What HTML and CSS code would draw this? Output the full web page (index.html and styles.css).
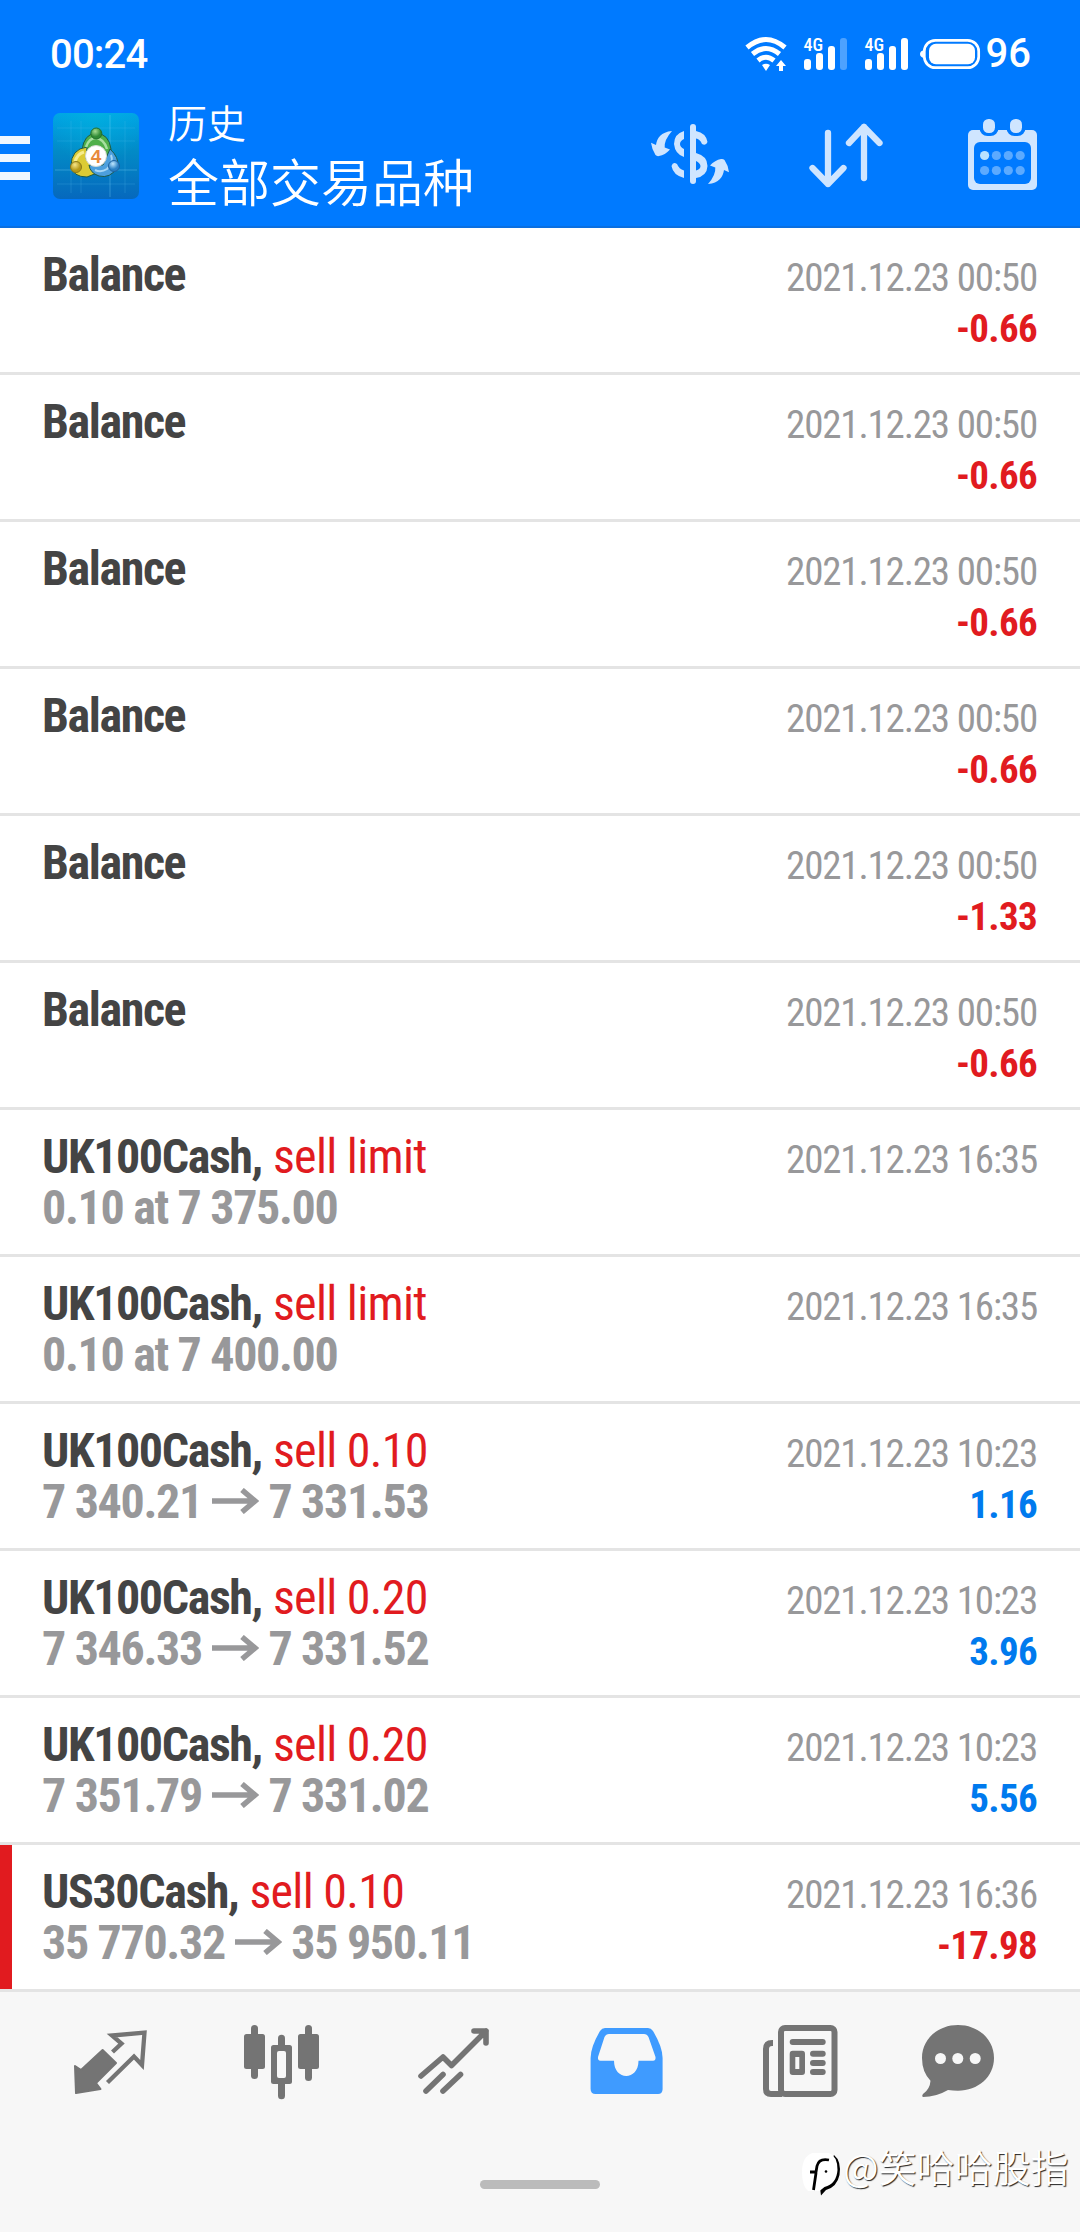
FILE: index.html
```html
<!DOCTYPE html>
<html lang="zh">
<head>
<meta charset="utf-8">
<title>历史</title>
<link rel="stylesheet" href="styles.css">
</head>
<body>
<header class="top">
  <div class="status">
    <span class="clock">00:24</span>
    <div class="indicators">
      <svg class="wifi" width="42" height="36" viewBox="745 36 42 36">
        <g fill="none" stroke="#fff" stroke-width="5">
          <path d="M747 47.5 Q766 31.500 785 47.500"/>
          <path d="M752.500 54 Q766 43 779.500 54"/>
          <path d="M758 60.500 Q766 54 774 60.500"/>
        </g>
        <path fill="#fff" d="M762 65 Q766 62.500 770 65 L766 71Z M781 60 l5 6 h-3 v5 h-4 v-5 h-3z"/>
      </svg>
      <div class="signal sim1"><span>4G</span>
        <svg width="44" height="34" viewBox="804 37 44 34"><g fill="#fff"><rect x="804" y="59" width="7" height="11" rx="3"/><rect x="816" y="53" width="7" height="17" rx="3"/><rect x="828" y="46" width="7" height="24" rx="3"/><rect x="840" y="38" width="7" height="32" rx="3" opacity=".3"/></g></svg>
      </div>
      <div class="signal sim2"><span>4G</span>
        <svg width="44" height="34" viewBox="804 37 44 34"><g fill="#fff"><rect x="804" y="59" width="7" height="11" rx="3"/><rect x="816" y="53" width="7" height="17" rx="3"/><rect x="828" y="46" width="7" height="24" rx="3"/><rect x="840" y="38" width="7" height="32" rx="3"/></g></svg>
      </div>
      <svg class="battery" width="62" height="32" viewBox="919 38 62 32">
        <path d="M924 50 q-4 1 -4 4 q0 3 4 4z" fill="#fff"/>
        <rect x="924.300" y="40.300" width="54.400" height="27.400" rx="11" fill="none" stroke="#fff" stroke-width="2.700"/>
        <rect x="929" y="43.700" width="46" height="20.600" rx="7" fill="#fff"/>
      </svg>
      <span class="percent">96</span>
    </div>
  </div>
  <div class="bar">
    <div class="burger"><i></i><i></i><i></i></div>
    <svg class="logo" width="86" height="86" viewBox="0 0 86 86">
      <defs>
        <linearGradient id="sky" x1="0" y1="0" x2="0" y2="1"><stop offset="0" stop-color="#00a3e6"/><stop offset=".45" stop-color="#028ac6"/><stop offset="1" stop-color="#0668bd"/></linearGradient>
        <radialGradient id="glow" cx=".5" cy="0" r=".6"><stop offset="0" stop-color="#0bd" stop-opacity=".5"/><stop offset="1" stop-color="#0bd" stop-opacity="0"/></radialGradient>
        <radialGradient id="gr" cx=".4" cy=".3"><stop offset="0" stop-color="#a5dd92"/><stop offset="1" stop-color="#2f8a35"/></radialGradient>
        <radialGradient id="ye" cx=".4" cy=".3"><stop offset="0" stop-color="#f5e68a"/><stop offset="1" stop-color="#b79a18"/></radialGradient>
        <radialGradient id="bl" cx=".4" cy=".3"><stop offset="0" stop-color="#bfe6ff"/><stop offset="1" stop-color="#2a7fc4"/></radialGradient>
      </defs>
      <rect width="86" height="86" rx="7" fill="url(#sky)"/>
      <rect width="86" height="86" rx="7" fill="url(#glow)"/>
      <path d="M18 8V80M28 8V80M72 8V80M4 15H82M4 28H82M4 71H82" stroke="#5cc4f0" stroke-opacity=".22"/>
      <path d="M57 2V84M2 57H84" stroke="#7fd4f5" stroke-opacity=".35"/>
      <g stroke="#1d5a4a" stroke-width="1">
        <path d="M29 37 Q31 21 43 20 Q56 21 58 36 Q58 45 52 49 L34 42Z" fill="#4faf4a"/>
        <path d="M34 34 Q18 36 18 53 Q20 64 34 64 L44 60 L33 46Z" fill="#dccb35"/>
        <path d="M57 36 Q66 44 65 54 Q57 66 46 63 Q37 60 36 52 L50 52Z" fill="#4c9fdd"/>
      </g>
      <path d="M33 34 Q36 25 43 25 Q51 26 54 36" fill="none" stroke="#a8dfa0" stroke-width="2.500"/>
      <path d="M22 49 Q24 41 31 39" fill="none" stroke="#f7ed8d" stroke-width="3"/>
      <path d="M58 42 Q61 49 54 56 Q48 60 42 57" fill="none" stroke="#a7d6f5" stroke-width="2"/>
      <circle cx="43.300" cy="20.500" r="5.500" fill="url(#gr)" stroke="#23702b"/>
      <circle cx="23" cy="54" r="5.500" fill="url(#ye)" stroke="#8b7a1a"/>
      <circle cx="61" cy="53" r="5.500" fill="url(#bl)" stroke="#1e62a0"/>
      <circle cx="43" cy="43" r="10.500" fill="#fff" stroke="#d5dcd5"/>
      <text x="43" y="49.500" text-anchor="middle" class="four">4</text>
    </svg>
    <div class="titles"><h1>历史</h1><p>全部交易品种</p></div>
    <svg class="act money" width="80" height="62" viewBox="650 123 80 62">
      <g fill="#cfe5ff">
        <rect x="690" y="124" width="6" height="60" rx="3"/>
        <path id="swap" d="M672 131 C661 132 657 138 656 145 L651 142.700 Q652 150 655.500 155 Q657 156.500 659 156 Q665 155 670 149.500 L664.700 147.500 Q664 140 672 131Z"/>
        <use href="#swap" transform="rotate(180 690 157.500)"/>
        <path d="M684 131 Q674 134 674 144 Q675 154 684 157 V149 Q680 147 680 144 Q680 141 684 139Z M696 131 Q706 133 707.500 142 Q706 146 702 144 Q700 139 696 138.500Z M671.500 166 Q673 161 677 164 Q679 169 684 170.500 V178 Q673 175 671.500 166Z M696 153 Q707.500 156 707.500 166 Q707 176 696 178 V170.500 Q700.500 169 700.500 166 Q700 163 696 161Z"/>
      </g>
    </svg>
    <svg class="act sort" width="76" height="66" viewBox="808 122 76 66" fill="none" stroke="#cfe5ff" stroke-width="6.300" stroke-linecap="round" stroke-linejoin="round">
      <path d="M828 133V184M812.500 168L828 184L843.500 168M864 178V127M849 143L864 127L879.500 143"/>
    </svg>
    <svg class="act calendar" width="70" height="72" viewBox="968 119 70 72">
      <rect x="968" y="130" width="69" height="60" rx="5" fill="#cfe5ff"/>
      <rect x="974" y="142" width="57" height="42" rx="6" fill="#007aff"/>
      <rect x="979.500" y="116" width="19" height="20" rx="8" fill="#007aff"/><rect x="1006.500" y="116" width="19" height="20" rx="8" fill="#007aff"/>
      <g fill="#cfe5ff"><rect x="983" y="119" width="12" height="14" rx="5.500"/><rect x="1010" y="119" width="12" height="14" rx="5.500"/></g>
      <circle cx="984.600" cy="155.500" r="4.600" fill="#b9e2ff"/>
      <g fill="#5caaff"><circle cx="996.400" cy="155.500" r="4.600"/><circle cx="1008.300" cy="155.500" r="4.600"/><circle cx="1020.200" cy="155.500" r="4.600"/><circle cx="984.600" cy="170.500" r="4.600"/><circle cx="996.400" cy="170.500" r="4.600"/><circle cx="1008.300" cy="170.500" r="4.600"/><circle cx="1020.200" cy="170.500" r="4.600"/></g>
    </svg>
  </div>
</header>
<main class="list">
  <article class="row"><div class="l"><b>Balance</b></div><div class="r"><time>2021.12.23 00:50</time><strong class="neg">-0.66</strong></div></article>
  <article class="row"><div class="l"><b>Balance</b></div><div class="r"><time>2021.12.23 00:50</time><strong class="neg">-0.66</strong></div></article>
  <article class="row"><div class="l"><b>Balance</b></div><div class="r"><time>2021.12.23 00:50</time><strong class="neg">-0.66</strong></div></article>
  <article class="row"><div class="l"><b>Balance</b></div><div class="r"><time>2021.12.23 00:50</time><strong class="neg">-0.66</strong></div></article>
  <article class="row"><div class="l"><b>Balance</b></div><div class="r"><time>2021.12.23 00:50</time><strong class="neg">-1.33</strong></div></article>
  <article class="row"><div class="l"><b>Balance</b></div><div class="r"><time>2021.12.23 00:50</time><strong class="neg">-0.66</strong></div></article>
  <article class="row"><div class="l"><div><b>UK100Cash,</b> <span class="side">sell limit</span></div><div class="price">0.10 at 7 375.00</div></div><div class="r"><time>2021.12.23 16:35</time></div></article>
  <article class="row"><div class="l"><div><b>UK100Cash,</b> <span class="side">sell limit</span></div><div class="price">0.10 at 7 400.00</div></div><div class="r"><time>2021.12.23 16:35</time></div></article>
  <article class="row"><div class="l"><div><b>UK100Cash,</b> <span class="side">sell 0.10</span></div><div class="price">7 340.21 <svg class="to" width="47" height="26" viewBox="0 0 47 26"><path d="M0 13H43M30 2L43 13L30 24"/></svg> 7 331.53</div></div><div class="r"><time>2021.12.23 10:23</time><strong class="pos">1.16</strong></div></article>
  <article class="row"><div class="l"><div><b>UK100Cash,</b> <span class="side">sell 0.20</span></div><div class="price">7 346.33 <svg class="to" width="47" height="26" viewBox="0 0 47 26"><path d="M0 13H43M30 2L43 13L30 24"/></svg> 7 331.52</div></div><div class="r"><time>2021.12.23 10:23</time><strong class="pos">3.96</strong></div></article>
  <article class="row"><div class="l"><div><b>UK100Cash,</b> <span class="side">sell 0.20</span></div><div class="price">7 351.79 <svg class="to" width="47" height="26" viewBox="0 0 47 26"><path d="M0 13H43M30 2L43 13L30 24"/></svg> 7 331.02</div></div><div class="r"><time>2021.12.23 10:23</time><strong class="pos">5.56</strong></div></article>
  <article class="row stop"><div class="l"><div><b>US30Cash,</b> <span class="side">sell 0.10</span></div><div class="price">35 770.32 <svg class="to" width="47" height="26" viewBox="0 0 47 26"><path d="M0 13H43M30 2L43 13L30 24"/></svg> 35 950.11</div></div><div class="r"><time>2021.12.23 16:36</time><strong class="neg">-17.98</strong></div></article>
</main>
<footer class="bottom">
  <nav class="tabs">
    <svg width="76" height="76" viewBox="72 2024 76 76"><path fill="#747474" stroke="#747474" stroke-width="2" stroke-linejoin="round" d="M75 2066L81 2070L102.600 2050L116 2063L96 2083L100.500 2089L76 2093Z"/><path fill="none" stroke="#747474" stroke-width="4.300" stroke-linejoin="miter" d="M112.500 2052L121.500 2043.500L112 2035.500L144.500 2032.500L142 2065L134 2056.500L107.500 2082.500"/></svg>
    <svg width="76" height="76" viewBox="244 2024 76 76" fill="#747474"><rect x="244" y="2034" width="21" height="35" rx="2.500"/><rect x="251" y="2025" width="7" height="54" rx="3.500"/><rect x="298" y="2034" width="21" height="35" rx="2.500"/><rect x="305" y="2025" width="7" height="56" rx="3.500"/><rect x="278" y="2034.700" width="7" height="64.500" rx="3.500"/><rect x="271" y="2045" width="21" height="39" rx="2.500"/><rect x="277" y="2051" width="9" height="27" rx="2" fill="#f7f7f7"/></svg>
    <svg width="76" height="76" viewBox="416 2024 76 76" fill="none" stroke="#747474" stroke-width="5.600" stroke-linecap="round" stroke-linejoin="round"><path d="M421 2076L443 2057L451.500 2065.500L486 2031M474 2031H486V2043M426 2091L443 2074.500M443 2091L460.500 2074.500"/></svg>
    <svg width="76" height="76" viewBox="588 2024 76 76"><path fill="#3f9bff" d="M605 2028H648Q651 2028 653 2031Q662.600 2047 662.600 2058V2089Q662.600 2094 658 2094H595.500Q590.600 2094 590.600 2089V2058Q590.600 2047 600 2031Q602 2028 605 2028Z"/><path fill="#f7f7f7" d="M609 2034H644Q647 2034 648.500 2037L655.500 2057Q656 2060.700 653 2060.700H638.500C638.500 2081 614 2081 614 2060.700H600.500Q597.500 2060.700 598 2057L604.500 2037Q606 2034 609 2034Z"/></svg>
    <svg width="76" height="76" viewBox="762 2024 76 76" fill="none" stroke="#747474" stroke-width="6"><rect x="781" y="2028" width="53.500" height="66" rx="4"/><path d="M773 2043H772Q766 2043 766 2049V2089Q766 2094 771 2094H782"/><g fill="#747474" stroke="none"><rect x="789.700" y="2039" width="36" height="6" rx="3"/><path fill-rule="evenodd" d="M792.700 2050.700H802Q805 2050.700 805 2054V2072Q805 2075 802 2075H792.700Q789.700 2075 789.700 2072V2054Q789.700 2050.700 792.700 2050.700ZM795.300 2057V2069H799.300V2057Z"/><rect x="810" y="2050.700" width="15.700" height="6" rx="3"/><rect x="810" y="2060" width="15.700" height="6" rx="3"/><rect x="810" y="2069" width="15.700" height="6" rx="3"/></g></svg>
    <svg width="76" height="76" viewBox="920 2024 76 76"><path fill="#747474" d="M958 2025C978 2025 994 2039 994 2058C994 2077 978 2090.700 958 2090.700Q953 2090.700 948 2090Q936 2097 923 2097Q921.500 2096 923 2094Q930 2089 930.500 2080.700Q922 2072 922 2058C922 2039 938 2025 958 2025Z"/><g fill="#f7f7f7"><circle cx="940.500" cy="2058.500" r="5.500"/><circle cx="957.800" cy="2058.500" r="5.500"/><circle cx="975.200" cy="2058.500" r="5.500"/></g></svg>
  </nav>
  <div class="home"></div>
  <div class="mark">
    <svg width="42" height="46" viewBox="800 2151 42 46"><path fill="#000" d="M834 2155Q841.500 2161 839.500 2175Q837 2187 826 2190L821 2195.500L820 2188Z"/><path fill="#fff" d="M812 2153H829Q837.500 2156 837.500 2170Q836.500 2184 824.500 2187L819.500 2191H808Q802 2186 802 2172Q802 2157 812 2153Z"/><path fill="none" stroke="#000" stroke-width="2.800" d="M829 2160Q819 2158 817 2166L816 2172H810M816 2173L813.500 2190"/><circle cx="826" cy="2171.500" r="1.300"/></svg>
    <span>@笑哈哈股指</span>
  </div>
</footer>
</body>
</html>
```
FILE: styles.css
```css
* { box-sizing: border-box; margin: 0; }
body { width: 1080px; height: 2232px; background: #fff; font-family: Roboto, "Noto Sans CJK SC", sans-serif; overflow: hidden; }
svg { display: block; flex: none; }
.top { height: 228px; background: #007aff; border-bottom: 2px solid #0a6fe0; color: #fff; }
.status { height: 96px; display: flex; justify-content: space-between; padding: 30px 49px 0 50px; font-size: 40px; line-height: 48px; font-weight: 500; }
.clock { letter-spacing: -0.8px; padding-top: 1px; }
.indicators { display: flex; align-items: flex-start; }
.wifi { margin-top: 6px; }
.signal { position: relative; width: 44px; margin: 7px 0 0 17px; }
.signal span { position: absolute; left: 0; top: -2px; font: 500 18px/20px "Roboto Condensed", Roboto; font-stretch: 75%; }
.battery { margin: 8px 5px 0 10px; }
.bar { height: 130px; display: flex; align-items: flex-start; }
.burger { width: 30px; margin: 40px 23px 0 0; display: grid; gap: 10px; }
.burger i { height: 8px; background: #f0f7ff; }
.logo { margin-top: 17px; }
.four { font: 700 19px "Liberation Sans"; fill: #e88a3c; }
.titles { width: 511px; flex: none; padding-left: 29px; font-weight: 350; font-family: "Noto Sans CJK SC", sans-serif; }
h1 { font-size: 39px; line-height: 50px; font-weight: 350; }
.titles p { font-size: 51px; line-height: 68px; }
.money { margin-top: 27px; }
.sort { margin: 26px 0 0 78px; }
.calendar { margin: 23px 0 0 84px; }
.row { height: 147px; display: flex; justify-content: space-between; padding: 21px 43px 0 42px; border-bottom: 3px solid #e4e4e4; font-family: "Roboto Condensed", Roboto, sans-serif; font-stretch: 75%; font-size: 48px; line-height: 51px; white-space: nowrap; }
.l b { color: #444; letter-spacing: -1.4px; }
.side { color: #e11b1f; letter-spacing: -0.7px; }
.price { color: #98989a; font-weight: 700; letter-spacing: -1.33px; }
.to { display: inline-block; vertical-align: 4px; fill: none; stroke: #98989a; stroke-width: 5.500; }
.r { padding-top: 4px; display: flex; flex-direction: column; align-items: flex-end; font-size: 39px; color: #98989a; }
time { letter-spacing: -1.17px; }
strong { letter-spacing: -0.7px; }
.neg { color: #e11b1f; }
.pos { color: #007aee; }
.stop { background: linear-gradient(#e11b1f, #e11b1f) 0 0 / 12px 144px no-repeat; }
.bottom { height: 240px; background: #f7f7f7; position: relative; }
.tabs { display: flex; gap: 96px; padding: 32px 0 0 72px; }
.tabs svg:nth-child(5) { margin-left: 2px; }
.tabs svg:last-child { margin-left: -14px; }
.home { width: 120px; height: 9px; border-radius: 5px; background: #bbb; margin: 80px auto 0; }
.mark { position: absolute; left: 800px; top: 159px; display: flex; align-items: flex-start; }
.mark span { margin: -12px 0 0 1px; font: 350 38px/54px "Noto Sans CJK SC", sans-serif; color: #fff; text-shadow: 1px 1px 1px #222; white-space: nowrap; }
```
